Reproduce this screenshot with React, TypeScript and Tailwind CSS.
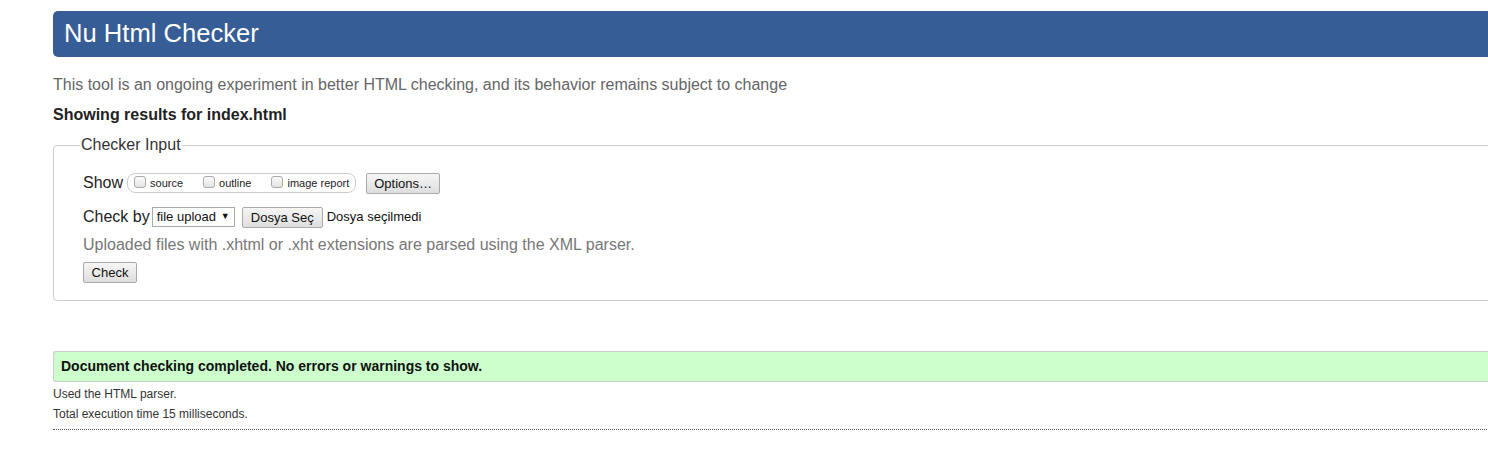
export default function App() {
  return (
    <div className="w-[1488px] h-[462px] overflow-hidden bg-white font-['Liberation_Sans',Arial,sans-serif] text-[#222]">
      <div className="ml-[53px] w-[1460px] pt-[11px]">
        {/* Header */}
        <header className="h-[46px] bg-[#365d95] rounded-l-[5px] flex items-center pl-[11px]">
          <h1 className="text-[25.6px] text-white leading-none">Nu Html Checker</h1>
        </header>

        <p className="mt-[19px] text-[16px] leading-[18px] text-[#666]">
          This tool is an ongoing experiment in better HTML checking, and its behavior remains subject to change
        </p>
        <p className="mt-[12px] text-[16px] leading-[18px] font-bold text-[#222]">Showing results for index.html</p>

        {/* Checker Input */}
        <fieldset className="mt-[12px] border border-[#ccc] rounded-[4px] px-[29px] pb-[16px] pt-[18px]">
          <legend className="px-[1px] ml-[-3px] text-[16px] leading-[18px] text-[#333]">Checker Input</legend>

          <div className="flex items-center h-[22px]">
            <span className="text-[16px] text-[#222]">Show</span>
            <div className="ml-[4px] flex items-center h-[20px] border border-[#ccc] rounded-[8px] pl-[6px] pr-[6px] text-[11px]">
              <label className="flex items-center">
                <span className="w-[12px] h-[12px] border border-[#aaa] rounded-[3px] bg-gradient-to-b from-[#fafafa] to-[#e4e4e4] mr-[4px] -mt-[3px]" />
                <span>source</span>
              </label>
              <label className="flex items-center ml-[20px]">
                <span className="w-[12px] h-[12px] border border-[#aaa] rounded-[3px] bg-gradient-to-b from-[#fafafa] to-[#e4e4e4] mr-[4px] -mt-[3px]" />
                <span>outline</span>
              </label>
              <label className="flex items-center ml-[20px]">
                <span className="w-[12px] h-[12px] border border-[#aaa] rounded-[3px] bg-gradient-to-b from-[#fafafa] to-[#e4e4e4] mr-[4px] -mt-[3px]" />
                <span>image report</span>
              </label>
            </div>
            <button className="ml-[10px] h-[21px] px-[7px] border border-[#aaa] rounded-[2px] bg-gradient-to-b from-[#f6f6f6] to-[#dedede] text-[13px] text-[#111]">
              Options…
            </button>
          </div>

          <div className="flex items-center mt-[12px] h-[22px]">
            <span className="text-[16px] text-[#222]">Check by</span>
            <div className="ml-[2px] h-[20px] w-[83px] border border-[#aaa] bg-white flex items-center px-[4px] text-[13px] text-[#111]">
              <span>file upload</span>
              <span className="ml-auto text-[9px]">▼</span>
            </div>
            <button className="ml-[7px] h-[21px] w-[81px] border border-[#aaa] rounded-[2px] bg-gradient-to-b from-[#f6f6f6] to-[#dedede] text-[13px] text-[#111]">
              Dosya Seç
            </button>
            <span className="ml-[4px] text-[13px] text-[#111]">Dosya seçilmedi</span>
          </div>

          <p className="mt-[8px] text-[16px] leading-[18px] text-[#777]">
            Uploaded files with .xhtml or .xht extensions are parsed using the XML parser.
          </p>

          <button className="mt-[8px] h-[21px] w-[54px] border border-[#aaa] rounded-[2px] bg-gradient-to-b from-[#f6f6f6] to-[#dedede] text-[13px] text-[#111]">
            Check
          </button>
        </fieldset>

        {/* Result */}
        <div className="mt-[50px] h-[31px] bg-[#ccffcc] border border-r-0 border-[#ccc] rounded-l-[3px] flex items-center pl-[7px]">
          <p className="text-[14px] font-bold text-[#111]">Document checking completed. No errors or warnings to show.</p>
        </div>
        <p className="mt-[5px] text-[12px] leading-[14px] text-[#333]">Used the HTML parser.</p>
        <p className="mt-[6px] text-[12px] leading-[14px] text-[#333]">Total execution time 15 milliseconds.</p>
        <div className="mt-[8px] border-t border-dotted border-[#555]" />
      </div>
    </div>
  )
}
